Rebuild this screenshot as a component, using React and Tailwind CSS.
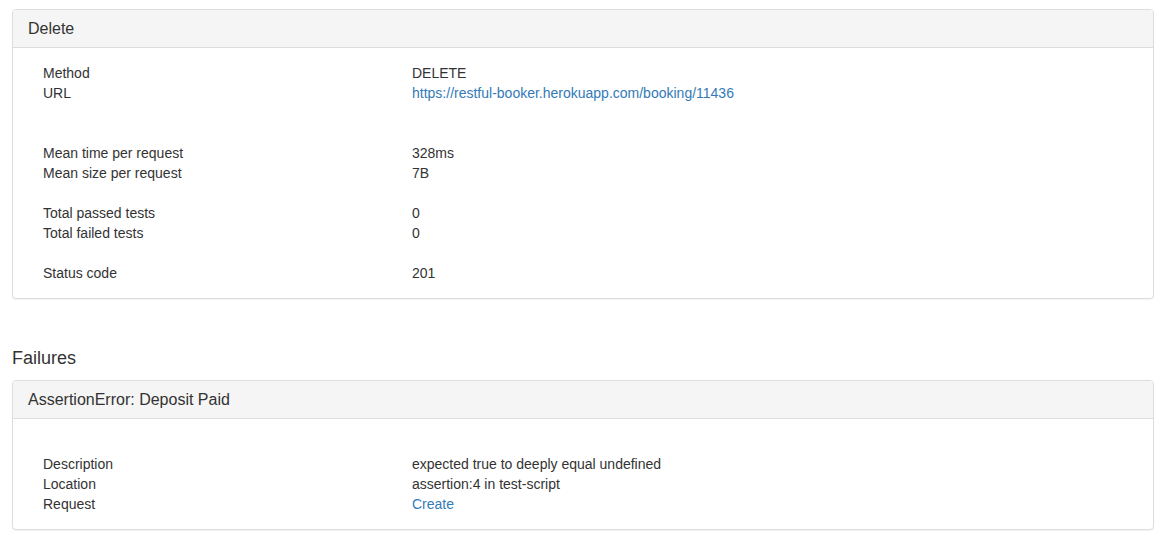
import React from "react";

function Row({ label, value, link }) {
  return (
    <div className="flex">
      <div className="w-[369px] shrink-0 px-[15px]">{label}</div>
      <div className="flex-1 px-[15px]">
        {link ? (
          <a href="#" className="text-[#337ab7] no-underline">{value}</a>
        ) : (
          value
        )}
      </div>
    </div>
  );
}

function Panel({ title, children }) {
  return (
    <div className="border border-[#dddddd] rounded-[4px] bg-white shadow-[0_1px_1px_rgba(0,0,0,0.05)]">
      <div className="px-[15px] py-[10px] bg-[#f5f5f5] border-b border-[#dddddd] rounded-t-[3px] text-[16px] leading-[17px] text-[#333333]">
        {title}
      </div>
      <div className="p-[15px]">{children}</div>
    </div>
  );
}

export default function App() {
  return (
    <div
      className="min-h-[543px] bg-white text-[#333333] text-[14px] leading-[20px] px-3 pt-[9px]"
      style={{ fontFamily: '"Liberation Sans", Helvetica, Arial, sans-serif' }}
    >
      <Panel title="Delete">
        <Row label="Method" value="DELETE" />
        <Row label="URL" value="https://restful-booker.herokuapp.com/booking/11436" link />
        <div className="h-10" />
        <Row label="Mean time per request" value="328ms" />
        <Row label="Mean size per request" value="7B" />
        <div className="h-5" />
        <Row label="Total passed tests" value="0" />
        <Row label="Total failed tests" value="0" />
        <div className="h-5" />
        <Row label="Status code" value="201" />
      </Panel>
      <h4 className="mt-[49px] mb-[12px] text-[18px] leading-[20px] font-normal">Failures</h4>
      <Panel title="AssertionError: Deposit Paid">
        <div className="h-5" />
        <Row label="Description" value="expected true to deeply equal undefined" />
        <Row label="Location" value="assertion:4 in test-script" />
        <Row label="Request" value="Create" link />
      </Panel>
    </div>
  );
}
